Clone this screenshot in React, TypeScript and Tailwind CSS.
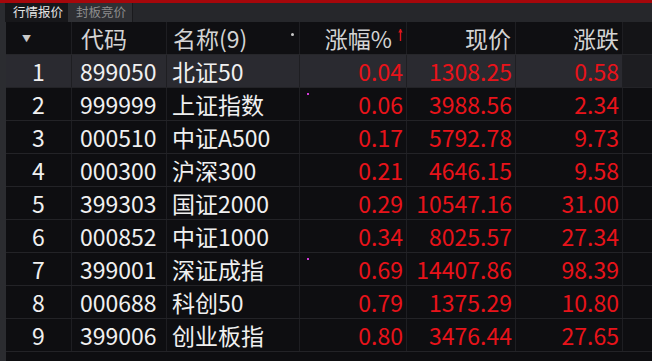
import React from "react";

interface Quote {
  code: string;
  name: string;
  pct: string;
  price: string;
  change: string;
  mark?: boolean;
}

const QUOTES: Quote[] = [
  { code: "899050", name: "北证50", pct: "0.04", price: "1308.25", change: "0.58" },
  { code: "999999", name: "上证指数", pct: "0.06", price: "3988.56", change: "2.34", mark: true },
  { code: "000510", name: "中证A500", pct: "0.17", price: "5792.78", change: "9.73" },
  { code: "000300", name: "沪深300", pct: "0.21", price: "4646.15", change: "9.58" },
  { code: "399303", name: "国证2000", pct: "0.29", price: "10547.16", change: "31.00" },
  { code: "000852", name: "中证1000", pct: "0.34", price: "8025.57", change: "27.34" },
  { code: "399001", name: "深证成指", pct: "0.69", price: "14407.86", change: "98.39", mark: true },
  { code: "000688", name: "科创50", pct: "0.79", price: "1375.29", change: "10.80" },
  { code: "399006", name: "创业板指", pct: "0.80", price: "3476.44", change: "27.65" },
];

const GRID = "grid grid-cols-[66px_95px_133px_107px_109px_107px_1fr] h-[33px]";
const CELL = "border-r border-[#1e1e22] flex items-center";

export default function App() {
  return (
    <div
      className="w-[652px] h-[361px] overflow-hidden bg-[#0e0e11] flex flex-col"
      style={{ fontFamily: '"Noto Sans CJK SC", "Noto Sans", sans-serif' }}
    >
      {/* red top strip */}
      <div className="h-[3px] bg-[#a5070b] shrink-0" />

      {/* tabs */}
      <div className="h-[19px] bg-[#26272b] flex shrink-0 text-[12.5px] leading-none">
        <div className="w-[5px] bg-[#2b2c30]" />
        <div className="w-[63px] bg-[#17171a] text-[#e6e6e6] flex items-center pl-[8px]">行情报价</div>
        <div className="w-[65px] bg-[#2f3034] text-[#8c8c8c] flex items-center pl-[8px] border-r border-[#1a1a1d]">封板竞价</div>
        <div className="flex-1" />
      </div>

      <div className="flex flex-1">
        <div className="w-[6px] bg-[#2b2c30] shrink-0" />
        <div className="flex-1 flex flex-col text-[23px] leading-none">
          {/* header */}
          <div className={`${GRID} bg-[#0f0f12] border-b border-[#26262a] text-[#d4d4d4]`}>
            <div className={`${CELL} pl-[16px]`}>
              <span className="text-[#c8c8c8] text-[9px]">▼</span>
            </div>
            <div className={`${CELL} pl-[9px]`}>代码</div>
            <div className={`${CELL} pl-[6px] relative`}>
              名称(9)
              <span className="absolute right-[5px] top-[11px] w-[3px] h-[3px] rounded-full bg-[#c8c8c8]" />
            </div>
            <div className={`${CELL} justify-end pr-[3px]`}>
              涨幅%
              <svg width="5" height="14" viewBox="0 0 5 14" className="ml-[6px] mb-[6px]">
                <path d="M2.5 1 L2.5 13" stroke="#e0151b" strokeWidth="1.4" />
                <path d="M0.3 4.5 L2.5 0.8 L4.7 4.5 Z" fill="#e0151b" />
              </svg>
            </div>
            <div className={`${CELL} justify-end pr-[4px]`}>现价</div>
            <div className={`${CELL} justify-end pr-[3px]`}>涨跌</div>
            <div className="bg-[#141417]" />
          </div>

          {QUOTES.map((q, i) => (
            <div
              key={q.code}
              className={`${GRID} border-b border-[#232327] ${i === 0 ? "bg-[#2a2a30]" : ""}`}
            >
              <div className={`${CELL} justify-center text-[#f0f0f0]`}>{i + 1}</div>
              <div className={`${CELL} pl-[8px] text-[#f0f0f0]`}>{q.code}</div>
              <div className={`${CELL} pl-[5px] text-[#f0f0f0]`}>{q.name}</div>
              <div className={`${CELL} justify-end pr-[3px] text-[#e8131a] relative`}>
                {q.mark && <span className="absolute left-[7px] top-[5px] w-[2px] h-[2px] bg-[#d23ad8]" />}
                {q.pct}
              </div>
              <div className={`${CELL} justify-end pr-[3px] text-[#e8131a]`}>{q.price}</div>
              <div className={`${CELL} justify-end pr-[3px] text-[#e8131a]`}>{q.change}</div>
              <div className={i === 0 ? "bg-[#1d1d21]" : ""} />
            </div>
          ))}
        </div>
      </div>
    </div>
  );
}
